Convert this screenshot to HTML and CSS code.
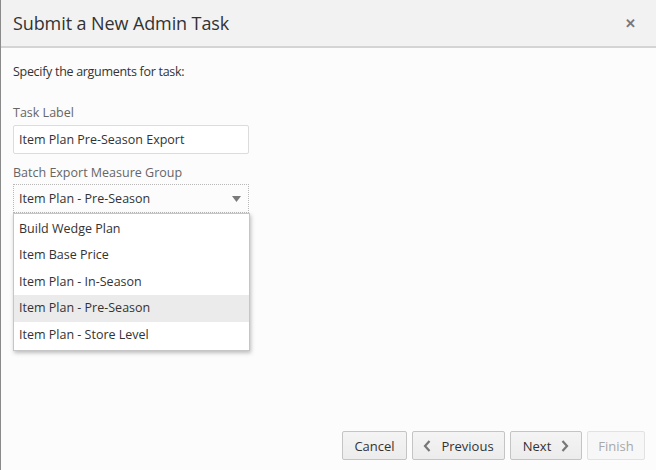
FILE: index.html
```html
<!DOCTYPE html>
<html>
<head>
<meta charset="utf-8">
<link rel="stylesheet" href="styles.css">
</head>
<body>
<div class="dialog">
  <div class="header">
    <div class="title">Submit a New Admin Task</div>
    <div class="close">&#x2715;</div>
  </div>
  <div class="content">
    <div class="intro">Specify the arguments for task:</div>
    <div class="label">Task Label</div>
    <div class="input">Item Plan Pre-Season Export</div>
    <div class="label label2">Batch Export Measure Group</div>
    <div class="selectwrap">
      <div class="select">
        <span>Item Plan - Pre-Season</span>
        <svg class="caret" width="9" height="6" viewBox="0 0 9 6"><path d="M0 0H9L4.5 6Z" fill="#7a7a7a"/></svg>
      </div>
      <div class="list">
        <div class="opt">Build Wedge Plan</div>
        <div class="opt">Item Base Price</div>
        <div class="opt">Item Plan - In-Season</div>
        <div class="opt sel">Item Plan - Pre-Season</div>
        <div class="opt">Item Plan - Store Level</div>
      </div>
    </div>
  </div>
  <div class="footer">
    <div class="btn cancel">Cancel</div>
    <div class="btn prev"><svg width="8" height="12" viewBox="0 0 8 12"><path d="M6.5 1L2 6l4.5 5" fill="none" stroke="#777" stroke-width="2.2"/></svg><span>Previous</span></div>
    <div class="btn next"><span>Next</span><svg width="8" height="12" viewBox="0 0 8 12"><path d="M1.5 1L6 6l-4.5 5" fill="none" stroke="#777" stroke-width="2.2"/></svg></div>
    <div class="btn finish">Finish</div>
  </div>
</div>
</body>
</html>
```
FILE: styles.css
```css
html, body { margin: 0; padding: 0; }
body {
  font-family: "Open Sans", "Noto Sans", sans-serif;
  font-size: 12.5px;
  color: #333;
  background: #fcfcfc;
}
.dialog {
  width: 655px;
  height: 470px;
  border-left: 1px solid #8a8a8a;
  display: flex;
  flex-direction: column;
  background: #fcfcfc;
}
.header {
  height: 46px;
  background: #f2f2f2;
  border-bottom: 2px solid #d4d4d4;
  display: flex;
  align-items: center;
  justify-content: space-between;
  padding: 0 20px 0 12px;
}
.title {
  font-size: 18px;
  color: #333;
  letter-spacing: -0.1px;
}
.close {
  font-size: 13px;
  color: #777;
  font-weight: bold;
}
.content {
  flex: 1;
  padding: 15px 0 0 12px;
}
.intro {
  line-height: 18px;
  letter-spacing: -0.3px;
}
.label {
  color: #666;
  line-height: 18px;
  margin-top: 23px;
}
.label2 { margin-top: 10px; }
.input {
  margin-top: 3px;
  width: 224px;
  height: 27px;
  line-height: 27px;
  border: 1px solid #dcdcdc;
  border-radius: 2px;
  background: #fff;
  padding-left: 5px;
  padding-right: 5px;
}
.selectwrap {
  position: relative;
  margin-top: 2px;
  width: 236px;
}
.select {
  height: 27px;
  border: 1px dotted #b8b8b8;
  display: flex;
  align-items: center;
  justify-content: space-between;
  padding: 0 7px 0 5px;
  background: #fcfcfc;
}
.list {
  position: absolute;
  top: 29px;
  left: 0;
  width: 235px;
  background: #fff;
  border: 1px solid #c6c6c6;
  box-shadow: 1px 2px 4px rgba(0,0,0,0.25);
  padding: 2px 0 2px;
}
.opt {
  height: 26.4px;
  line-height: 26px;
  padding-left: 5px;
}
.opt.sel { background: #ebebeb; }
.footer {
  display: flex;
  justify-content: flex-end;
  gap: 5px;
  padding: 0 11px 10px 0;
}
.btn {
  height: 27px;
  border: 1px solid #c4c4c4;
  border-radius: 2px;
  background: linear-gradient(#f4f4f4, #ececec);
  display: flex;
  align-items: center;
  justify-content: center;
  gap: 10px;
  font-size: 13px;
}
.cancel { width: 63px; }
.prev { width: 91px; }
.next { width: 70px; }
.finish {
  width: 56px;
  background: #f7f7f7;
  border-color: #e2e2e2;
  color: #a8a8a8;
}
```
